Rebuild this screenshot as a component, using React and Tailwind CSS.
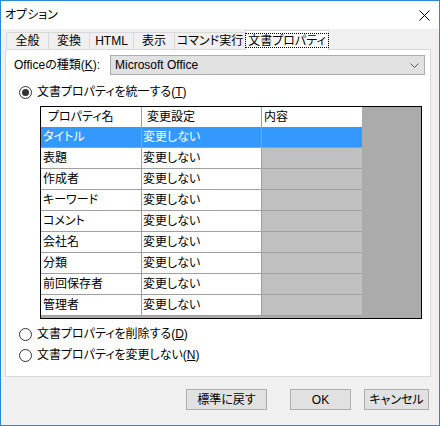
import React from 'react'

const tabs = [
  { label: '全般', w: 'w-[42px]' },
  { label: '変換', w: 'w-[41px]' },
  { label: 'HTML', w: 'w-[44px]' },
  { label: '表示', w: 'w-[41px]' },
  { label: 'コマンド実行', w: 'w-[71px]' },
]

const rows = ['タイトル', '表題', '作成者', 'キーワード', 'コメント', '会社名', '分類', '前回保存者', '管理者']

function Radio({ checked, label }) {
  return (
    <div className="flex items-center h-[16px] pl-[13px]">
      <div className="w-[13px] h-[13px] rounded-full border border-[#333] bg-white flex items-center justify-center">
        {checked && <div className="w-[7px] h-[7px] rounded-full bg-[#333]" />}
      </div>
      <span className="ml-[5px]">{label}</span>
    </div>
  )
}

function Button({ w, children }) {
  return (
    <div className={`${w} h-[21px] bg-[#e1e1e1] border border-[#adadad] flex items-center justify-center`}>
      {children}
    </div>
  )
}

export default function App() {
  return (
    <div className="w-[440px] h-[426px] bg-[#f0f0f0] border border-[#2b88d8] text-[12px] leading-none text-black font-['Liberation_Sans','Noto_Sans_CJK_JP',sans-serif] [font-feature-settings:'palt'] flex flex-col">
      {/* title bar */}
      <div className="h-[28px] bg-white flex items-center justify-between pl-[4px] pr-[9px]">
        <span>オプション</span>
        <svg width="11" height="11" viewBox="0 0 11 11">
          <path d="M0.5 0.5 L10.5 10.5 M10.5 0.5 L0.5 10.5" stroke="#000" strokeWidth="1" />
        </svg>
      </div>

      {/* tabs */}
      <div className="h-[20px] flex items-end pl-[5px]">
        {tabs.map((t) => (
          <div key={t.label} className={`${t.w} h-[17px] border-l border-t border-[#d9d9d9] bg-[#f0f0f0] flex items-center justify-center whitespace-nowrap`}>
            {t.label}
          </div>
        ))}
        <div className="relative z-10 w-[84px] h-[20px] -mb-px -mr-[2px] border-l border-t border-r border-[#d9d9d9] bg-white flex items-start justify-center pt-[2px] whitespace-nowrap">
          <span className="border border-dotted border-black px-[2px] h-[15px] flex items-center whitespace-nowrap">文書プロパティ</span>
        </div>
      </div>

      {/* panel */}
      <div className="ml-[4px] w-[426px] h-[328px] border border-[#d9d9d9] bg-white flex flex-col">
        <div className="mt-[5px] flex items-center h-[20px]">
          <span className="w-[104px] pl-[8px]">Officeの種類(<span className="underline">K</span>):</span>
          <div className="w-[315px] h-[20px] bg-[#e1e1e1] border border-[#adadad] flex items-center justify-between pl-[4px] pr-[5px]">
            <span>Microsoft Office</span>
            <svg width="9" height="5" viewBox="0 0 9 5">
              <path d="M0.5 0.5 L4.5 4.5 L8.5 0.5" stroke="#555" strokeWidth="1" fill="none" />
            </svg>
          </div>
        </div>

        <div className="mt-[9px]">
          <Radio checked label={<>文書プロパティを統一する(<span className="underline">T</span>)</>} />
        </div>

        {/* grid */}
        <div className="mt-[6px] ml-[34px] w-[382px] h-[213px] border border-black flex flex-col bg-[#ababab]">
          <div className="flex h-[20px]">
            <div className="w-[101px] bg-white border-r border-[#a0a0a0] flex items-center pl-[7px]">プロパティ名</div>
            <div className="w-[120px] bg-white border-r border-[#a0a0a0] flex items-center pl-[5px]">変更設定</div>
            <div className="w-[100px] bg-white flex items-center pl-[2px]">内容</div>
            <div className="flex-1 bg-[#ababab]" />
          </div>
          {rows.map((r, i) => {
            const sel = i === 0
            return (
              <div key={r} className="flex h-[21px]">
                <div className={`w-[101px] border-r border-b border-[#a0a0a0] flex items-center pl-[2px] ${sel ? 'bg-[#3399ff] text-white' : 'bg-white'}`}>{r}</div>
                <div className={`w-[120px] border-r border-b border-[#a0a0a0] flex items-center pl-[1px] ${sel ? 'bg-[#3399ff] text-white' : 'bg-white'}`}>変更しない</div>
                <div className={`w-[100px] border-b border-[#a0a0a0] ${sel ? 'bg-[#3399ff]' : 'bg-[#c0c0c0]'}`} />
                <div className="flex-1 bg-[#ababab]" />
              </div>
            )
          })}
        </div>

        <div className="mt-[7px]">
          <Radio label={<>文書プロパティを削除する(<span className="underline">D</span>)</>} />
        </div>
        <div className="mt-[5px]">
          <Radio label={<>文書プロパティを変更しない(<span className="underline">N</span>)</>} />
        </div>
      </div>

      {/* buttons */}
      <div className="mt-[12px] flex pl-[185px]">
        <Button w="w-[81px]">標準に戻す</Button>
        <div className="ml-[23px]"><Button w="w-[61px]">OK</Button></div>
        <div className="ml-[13px]"><Button w="w-[65px]">キャンセル</Button></div>
      </div>
    </div>
  )
}
